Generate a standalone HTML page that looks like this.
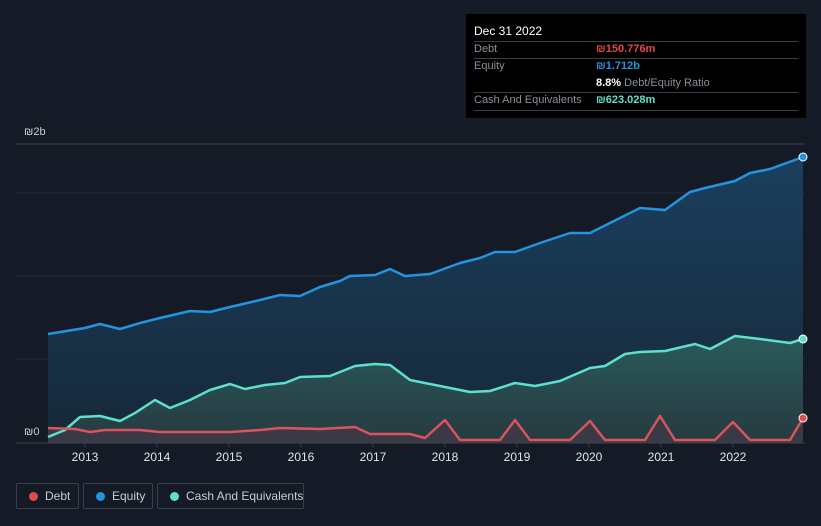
<!DOCTYPE html>
<html><head><meta charset="utf-8"><style>
body{margin:0;width:821px;height:526px;background:#151b26;font-family:"Liberation Sans",sans-serif;overflow:hidden;position:relative}
.tt{position:absolute;left:466px;top:14px;width:340px;height:104px;background:#000;font-size:11px;color:#8a8f98}
.tt .r{position:absolute;left:8px;right:8px;border-top:1px solid #3a3e45}
.lg{position:absolute;top:483px;height:26px;border:1px solid #3a404b;border-radius:2px;color:#c8ccd2;font-size:12px;line-height:24px;box-sizing:border-box;white-space:nowrap}
.lg i{position:absolute;left:12px;top:8px;width:9px;height:9px;border-radius:50%}
.lg span{position:absolute;left:28px;white-space:nowrap}
</style></head><body>
<svg width="821" height="526" style="position:absolute;left:0;top:0">
<defs>
<linearGradient id="ge" x1="0" y1="0" x2="0" y2="1"><stop offset="0" stop-color="#1b3f5e"/><stop offset="1" stop-color="#162838"/></linearGradient>
<linearGradient id="gc" x1="0" y1="0" x2="0" y2="1"><stop offset="0" stop-color="#2a5a5a"/><stop offset="1" stop-color="#263a40"/></linearGradient>
</defs>
<line x1="16" y1="144" x2="805" y2="144" stroke="#3a404b"/>
<line x1="16" y1="193" x2="805" y2="193" stroke="#232a36"/>
<line x1="16" y1="276" x2="805" y2="276" stroke="#232a36"/>
<line x1="16" y1="359" x2="805" y2="359" stroke="#232a36"/>
<path d="M48,334 L85,328 L100,324 L120,329 L140,323 L160,318 L190,311 L210,312 L230,307 L260,300 L280,295 L300,296 L320,287 L340,281 L350,276 L375,275 L390,269 L405,276 L430,274 L460,263 L480,258 L495,252 L515,252 L540,243 L570,233 L590,233 L610,223 L640,208 L665,210 L690,192 L705,188 L735,181 L750,173 L770,169 L803,157 L803,443 L48,443Z" fill="url(#ge)"/>
<path d="M48,437 L65,430 L80,417 L100,416 L120,421 L135,413 L155,400 L170,408 L190,400 L210,390 L230,384 L245,389 L265,385 L285,383 L300,377 L330,376 L355,366 L375,364 L390,365 L410,380 L440,386 L470,392 L490,391 L515,383 L535,386 L560,381 L590,368 L605,366 L625,354 L640,352 L665,351 L695,344 L710,349 L735,336 L760,339 L790,343 L803,339 L803,443 L48,443Z" fill="url(#gc)"/>
<path d="M48,428 L75,429 L90,432 L105,430 L140,430 L160,432 L200,432 L230,432 L260,430 L280,428 L320,429 L355,427 L370,434 L410,434 L425,438 L445,420 L460,440 L500,440 L515,420 L530,440 L570,440 L590,421 L605,440 L645,440 L660,416 L675,440 L715,440 L733,422 L750,440 L790,440 L803,418 L803,443 L48,443Z" fill="#3a3a46"/>
<path d="M48,334 L85,328 L100,324 L120,329 L140,323 L160,318 L190,311 L210,312 L230,307 L260,300 L280,295 L300,296 L320,287 L340,281 L350,276 L375,275 L390,269 L405,276 L430,274 L460,263 L480,258 L495,252 L515,252 L540,243 L570,233 L590,233 L610,223 L640,208 L665,210 L690,192 L705,188 L735,181 L750,173 L770,169 L803,157" fill="none" stroke="#2394e0" stroke-width="2.5" stroke-linejoin="round"/>
<path d="M48,437 L65,430 L80,417 L100,416 L120,421 L135,413 L155,400 L170,408 L190,400 L210,390 L230,384 L245,389 L265,385 L285,383 L300,377 L330,376 L355,366 L375,364 L390,365 L410,380 L440,386 L470,392 L490,391 L515,383 L535,386 L560,381 L590,368 L605,366 L625,354 L640,352 L665,351 L695,344 L710,349 L735,336 L760,339 L790,343 L803,339" fill="none" stroke="#5de0cc" stroke-width="2.5" stroke-linejoin="round"/>
<path d="M48,428 L75,429 L90,432 L105,430 L140,430 L160,432 L200,432 L230,432 L260,430 L280,428 L320,429 L355,427 L370,434 L410,434 L425,438 L445,420 L460,440 L500,440 L515,420 L530,440 L570,440 L590,421 L605,440 L645,440 L660,416 L675,440 L715,440 L733,422 L750,440 L790,440 L803,418" fill="none" stroke="#d9545c" stroke-width="2.5" stroke-linejoin="round"/>
<line x1="16" y1="443" x2="805" y2="443" stroke="#3a404b"/>
<circle cx="803" cy="157" r="4" fill="#2394e0" stroke="#fff" stroke-width="1"/>
<circle cx="803" cy="339" r="4" fill="#5de0cc" stroke="#fff" stroke-width="1"/>
<circle cx="803" cy="418" r="4" fill="#e04a50" stroke="#fff" stroke-width="1"/>
<g fill="#e0e3e8" font-size="12" text-anchor="middle" font-family="Liberation Sans">
<text x="85" y="461">2013</text><text x="157" y="461">2014</text><text x="229" y="461">2015</text><text x="301" y="461">2016</text><text x="373" y="461">2017</text><text x="445" y="461">2018</text><text x="517" y="461">2019</text><text x="589" y="461">2020</text><text x="661" y="461">2021</text><text x="733" y="461">2022</text>
</g>
<g stroke="#3a404b"><line x1="85" y1="443" x2="85" y2="447"/><line x1="157" y1="443" x2="157" y2="447"/><line x1="229" y1="443" x2="229" y2="447"/><line x1="301" y1="443" x2="301" y2="447"/><line x1="373" y1="443" x2="373" y2="447"/><line x1="445" y1="443" x2="445" y2="447"/><line x1="517" y1="443" x2="517" y2="447"/><line x1="589" y1="443" x2="589" y2="447"/><line x1="661" y1="443" x2="661" y2="447"/><line x1="733" y1="443" x2="733" y2="447"/></g>
<text x="24" y="135" fill="#c8ccd2" font-size="11">₪2b</text>
<text x="24" y="435" fill="#c8ccd2" font-size="11">₪0</text>
</svg>
<div class="tt">
<div style="position:absolute;left:8px;top:10px;color:#fff;font-size:12px">Dec 31 2022</div>
<div class="r" style="top:27px"></div>
<div style="position:absolute;left:8px;top:29px">Debt</div><div style="position:absolute;left:130px;top:29px;color:#e0484e;font-weight:bold">₪150.776m</div>
<div class="r" style="top:44px"></div>
<div style="position:absolute;left:8px;top:46px">Equity</div><div style="position:absolute;left:130px;top:46px;color:#2394e0;font-weight:bold">₪1.712b</div>
<div style="position:absolute;left:130px;top:63px"><b style="color:#fff">8.8%</b> Debt/Equity Ratio</div>
<div class="r" style="top:78px"></div>
<div style="position:absolute;left:8px;top:80px">Cash And Equivalents</div><div style="position:absolute;left:130px;top:80px;color:#5de0cc;font-weight:bold">₪623.028m</div>
<div class="r" style="top:96px"></div>
</div>
<div class="lg" style="left:16px;width:63px"><i style="background:#e04a50"></i><span>Debt</span></div>
<div class="lg" style="left:83px;width:70px"><i style="background:#2394e0"></i><span>Equity</span></div>
<div class="lg" style="left:157px;width:147px"><i style="background:#5de0cc"></i><span>Cash And Equivalents</span></div>
</body></html>
